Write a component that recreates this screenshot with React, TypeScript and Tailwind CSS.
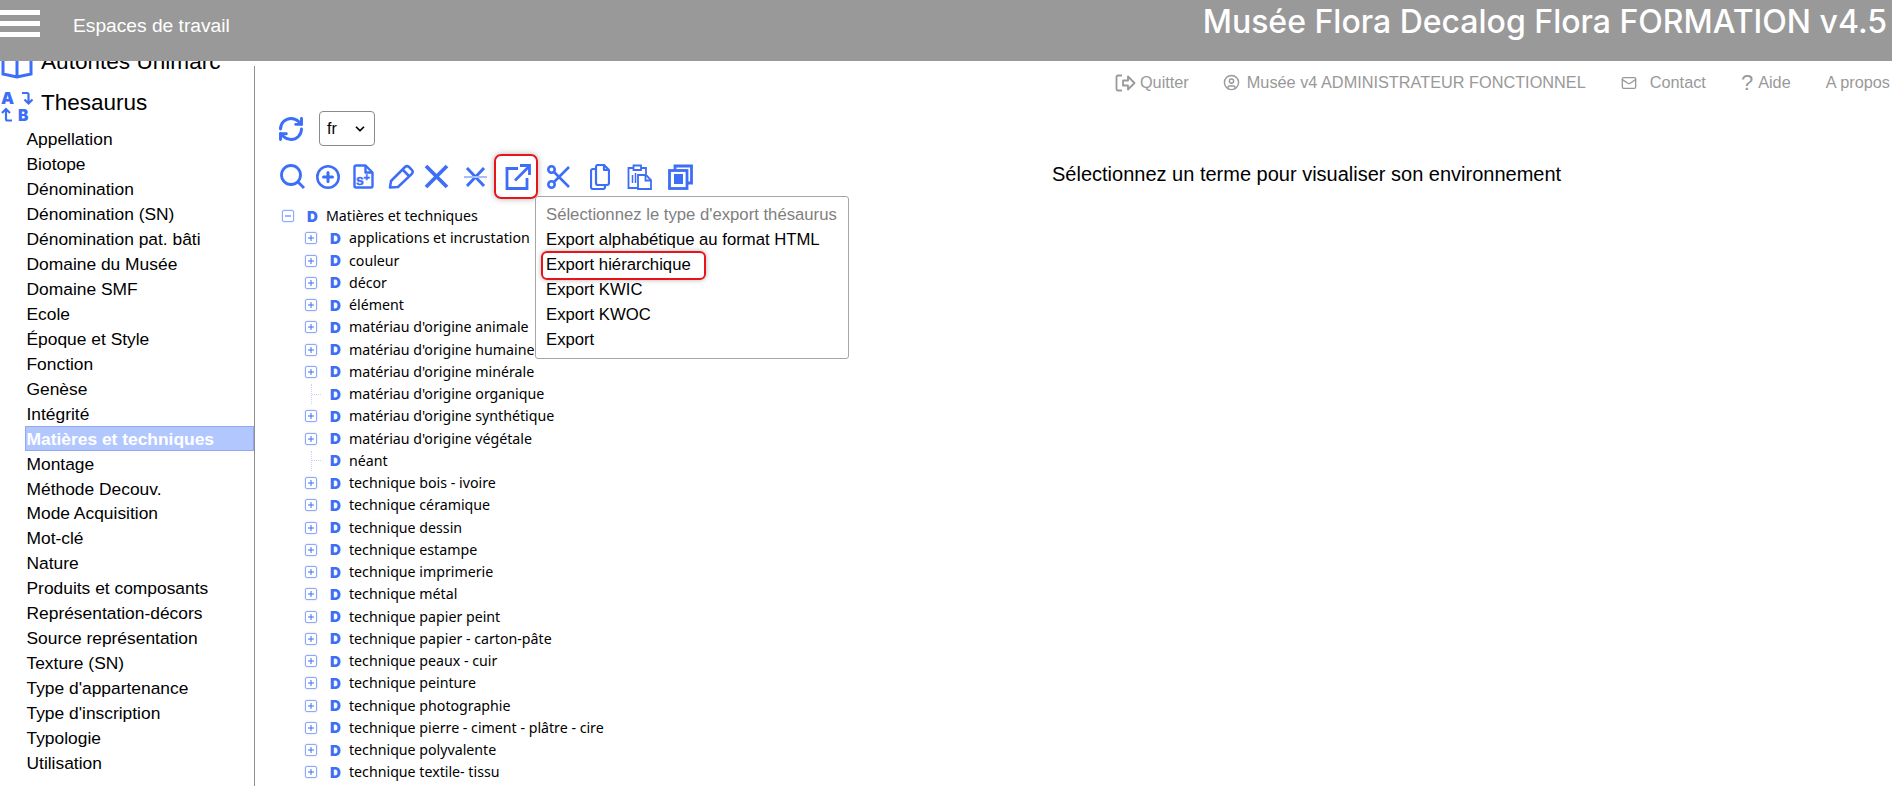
import { RefreshCw, ChevronDown, CircleUser, Mail } from 'lucide-react'

const sidebarItems = [
  'Appellation', 'Biotope', 'Dénomination', 'Dénomination (SN)', 'Dénomination pat. bâti', 'Domaine du Musée',
  'Domaine SMF', 'Ecole', 'Époque et Style', 'Fonction', 'Genèse', 'Intégrité', 'Matières et techniques', 'Montage',
  'Méthode Decouv.', 'Mode Acquisition', 'Mot-clé', 'Nature', 'Produits et composants', 'Représentation-décors',
  'Source représentation', 'Texture (SN)', "Type d'appartenance", "Type d'inscription", 'Typologie', 'Utilisation',
]

const treeItems: [string, boolean][] = [
  ['applications et incrustation', true], ['couleur', true], ['décor', true], ['élément', true],
  ["matériau d'origine animale", true], ["matériau d'origine humaine", true], ["matériau d'origine minérale", true],
  ["matériau d'origine organique", false], ["matériau d'origine synthétique", true], ["matériau d'origine végétale", true],
  ['néant', false], ['technique bois - ivoire', true], ['technique céramique', true], ['technique dessin', true],
  ['technique estampe', true], ['technique imprimerie', true], ['technique métal', true], ['technique papier peint', true],
  ['technique papier - carton-pâte', true], ['technique peaux - cuir', true], ['technique peinture', true],
  ['technique photographie', true], ['technique pierre - ciment - plâtre - cire', true], ['technique polyvalente', true],
  ['technique textile- tissu', true],
]

const exportItems = ['Export alphabétique au format HTML', 'Export hiérarchique', 'Export KWIC', 'Export KWOC', 'Export']

function ExpandBox({ minus }: { minus?: boolean }) {
  return (
    <span className="flex h-[12px] w-[12px] shrink-0 items-center justify-center rounded-[2px] border border-[#8fa8f8] bg-white text-[#3d6ef8] shadow-[0_0_2px_rgba(61,110,248,0.35)]">
      <svg width="8" height="8" viewBox="0 0 8 8">
        <path d={minus ? 'M1 4h6' : 'M1 4h6M4 1v6'} stroke="currentColor" strokeWidth="1" fill="none" />
      </svg>
    </span>
  )
}

function LetterD() {
  return <span className="w-[10px] shrink-0 font-['Inter',sans-serif] text-[15px] font-black leading-none text-[#3d6ef8]">D</span>
}

function TreeRow({ label, expandable }: { label: string; expandable: boolean }) {
  return (
    <div className="flex h-[22.25px] items-center pl-[24px]">
      {expandable ? (
        <ExpandBox />
      ) : (
        <span className="flex h-[20px] w-[12px] shrink-0 items-center">
          <span className="ml-[6px] h-full border-l border-dotted border-[#c9d4f5]" />
          <span className="w-[9px] shrink-0 border-t border-dotted border-[#c9d4f5]" />
        </span>
      )}
      <span className="ml-[13px] flex"><LetterD /></span>
      <span className="ml-[9px] whitespace-nowrap">{label}</span>
    </div>
  )
}

export default function App() {
  return (
    <div className="flex h-[786px] w-[1892px] flex-col overflow-hidden bg-white font-['Liberation_Sans',sans-serif] text-black">
      {/* header */}
      <header className="flex h-[61px] shrink-0 items-start bg-[#999999] text-white">
        <div className="mt-[10px] flex w-[40px] flex-col gap-[6px]">
          <span className="h-[5px] bg-white" />
          <span className="h-[5px] bg-white" />
          <span className="h-[5px] bg-white" />
        </div>
        <span className="ml-[33px] mt-[12px] text-[19.2px]">Espaces de travail</span>
        <span className="ml-auto mr-[5px] mt-[3px] font-['Inter',sans-serif] text-[32px] font-medium leading-[38px]">
          Musée Flora Decalog Flora FORMATION v4.5
        </span>
      </header>

      <div className="flex min-h-0 flex-1">
        {/* sidebar */}
        <aside className="w-[254px] shrink-0 overflow-hidden">
          <div className="-mt-[15px] flex h-[34px] items-center">
            <svg width="34" height="32" viewBox="0 0 34 32" fill="none" stroke="#3d6ef8" strokeWidth="3" className="ml-[1px] shrink-0">
              <path d="M2 0v27l14 3 14-3V0M16 12v18" />
            </svg>
            <span className="mb-[2px] ml-[6px] whitespace-nowrap text-[22.6px] leading-none">Autorités Unimarc</span>
          </div>
          <div className="mt-[10px] flex h-[32px] items-center">
            <svg width="33" height="32" viewBox="0 0 33 32" fill="none" stroke="#3d6ef8" strokeWidth="2.2" className="ml-[1px] shrink-0 overflow-visible">
              <text x="0" y="14" fontSize="16.5" fontWeight="900" fontFamily="Inter" fill="#3d6ef8" stroke="none">A</text>
              <text x="17" y="31" fontSize="15.5" fontWeight="900" fontFamily="Inter" fill="#3d6ef8" stroke="none">B</text>
              <path d="M21 3h5a1.500 1.500 0 0 1 1.500 1.500V13M23.500 9.500l4 4 4-4" />
              <path d="M11 30.500H6.500A1.500 1.500 0 0 1 5 29v-9M1 23l4-4 4 4" />
            </svg>
            <span className="mb-[6px] ml-[7px] text-[22.5px] leading-none">Thesaurus</span>
          </div>
          <ul className="mt-[5px] text-[17.4px]">
            {sidebarItems.map((item) => (
              <li
                key={item}
                className={
                  item === 'Matières et techniques'
                    ? 'ml-[25px] flex h-[24.95px] items-center border border-[#8fa8f0] bg-[#b3c7ff] pl-[0.5px] font-bold text-white'
                    : 'ml-[25px] flex h-[24.95px] items-center pl-[1.5px]'
                }
              >
                {item}
              </li>
            ))}
          </ul>
        </aside>
        <div className="mt-[5px] w-[1px] shrink-0 bg-[#8f8f8f]" />

        {/* main */}
        <main className="min-w-0 flex-1">
          <nav className="flex h-[42px] items-center justify-end gap-[35px] pr-[2px] pt-[1px] text-[16.3px] text-[#999999]">
            <span className="-mr-[1px] flex items-center gap-[4px]">
              <svg width="21" height="20" viewBox="0 0 21 20" fill="none" stroke="currentColor" strokeWidth="1.800">
                <path d="M7 2.500H3a1.500 1.500 0 0 0-1.500 1.500v12A1.500 1.500 0 0 0 3 17.500h4" />
                <path d="M8 7.500h5V3.500l6.500 6.500-6.500 6.500v-4H8z" strokeLinejoin="round" />
              </svg>
              Quitter
            </span>
            <span className="flex items-center gap-[7px]"><CircleUser size={17} />Musée v4 ADMINISTRATEUR FONCTIONNEL</span>
            <span className="flex items-center gap-[13px]"><Mail size={16} />Contact</span>
            <span className="flex items-center gap-[5px]"><span className="text-[22px] leading-none">?</span>Aide</span>
            <span>A propos</span>
          </nav>

          <div className="flex">
            <div className="w-[620px] shrink-0">
              <div className="ml-[22px] mt-[8px] flex items-center gap-[14px]">
                <RefreshCw size={28} color="#3d6ef8" strokeWidth={2.5} />
                <div className="flex h-[35px] w-[56px] items-center justify-between rounded-[4px] border border-[#8a8a8a] pl-[7px] pr-[7px] text-[16px]">
                  fr
                  <ChevronDown size={14} strokeWidth={3} />
                </div>
              </div>

              {/* toolbar */}
              <div className="ml-[25px] mt-[8px] flex h-[45px] items-center text-[#3d6ef8]">
                <svg width="25" height="25" viewBox="0 0 25 25" fill="none" stroke="currentColor" strokeWidth="2.800">
                  <circle cx="11" cy="11" r="9.500" />
                  <path d="M18 18l6 6" />
                </svg>
                <svg width="24" height="24" viewBox="0 0 24 24" fill="none" stroke="currentColor" strokeWidth="2.600" className="ml-[11px]">
                  <circle cx="12" cy="12" r="10.700" />
                  <path d="M12 7.500v9M7.500 12h9" strokeWidth="3" strokeLinecap="round" />
                </svg>
                <svg width="21" height="25" viewBox="0 0 21 25" fill="none" stroke="currentColor" strokeWidth="2.400" className="ml-[13px]">
                  <path d="M1.500 3a1.500 1.500 0 0 1 1.500-1.500h9.500l7 7V22a1.500 1.500 0 0 1-1.500 1.500H3A1.500 1.500 0 0 1 1.500 22z" strokeLinejoin="round" />
                  <path d="M12.500 1.500v7h7" strokeLinejoin="round" />
                  <text x="3" y="21" fontSize="14" fontWeight="700" fill="currentColor" stroke="currentColor" strokeWidth="0.4" fontFamily="Liberation Sans">s</text>
                  <text x="10.500" y="17" fontSize="11" fontWeight="700" fill="currentColor" stroke="currentColor" strokeWidth="0.4" fontFamily="Liberation Sans">+</text>
                </svg>
                <svg width="26" height="25" viewBox="0 0 26 25" fill="none" stroke="currentColor" strokeWidth="2.500" strokeLinejoin="round" className="ml-[14px]">
                  <path d="M2 23.500l1-6.500L17 3q2-1.800 4 0l2.800 2.800q1.800 2 0 4L10 23z" />
                  <path d="M14.500 5.500l6.500 6.500" />
                </svg>
                <svg width="25" height="25" viewBox="0 0 25 25" fill="none" stroke="currentColor" strokeWidth="3.800" className="ml-[10px]">
                  <path d="M2 2l21 21M23 2L2 23" />
                </svg>
                <svg width="23" height="22" viewBox="0 0 23 22" fill="none" stroke="currentColor" strokeWidth="3" className="ml-[15px]">
                  <path d="M3 2l17 18M20 2L3 20" />
                  <path d="M0 11h23" stroke="#a9bdfa" strokeWidth="2" />
                </svg>
                <span className="ml-[7px] flex h-[45px] w-[44px] shrink-0 items-center justify-center rounded-[7px] border-2 border-[#e8141c] pl-[3px] shadow-[0_0_6px_rgba(0,0,0,0.3)]">
                  <svg width="26" height="26" viewBox="0 0 26 26" fill="none" stroke="currentColor" strokeWidth="2.800">
                    <path d="M13 4.500H2v20h20V14" />
                    <path d="M10 16.500L24 2.500M15 1.500h9.500V11" />
                  </svg>
                </span>
                <svg width="23" height="24" viewBox="0 0 23 24" fill="none" stroke="currentColor" strokeWidth="2.600" className="ml-[9px]">
                  <circle cx="4.500" cy="4.500" r="3.200" />
                  <circle cx="4.500" cy="19.500" r="3.200" />
                  <path d="M7 7l15 15M7 17L22 2" />
                </svg>
                <svg width="20" height="26" viewBox="0 0 20 26" fill="none" stroke="currentColor" strokeWidth="2.200" strokeLinejoin="round" className="ml-[20px]">
                  <path d="M6 3a2 2 0 0 1 2-2h6l5 5v13a2 2 0 0 1-2 2H8a2 2 0 0 1-2-2z" />
                  <path d="M14 1v5h5" />
                  <path d="M6 5H3a2 2 0 0 0-2 2v16a2 2 0 0 0 2 2h10a2 2 0 0 0 2-2v-2" />
                </svg>
                <svg width="25" height="26" viewBox="0 0 25 26" fill="none" stroke="currentColor" strokeWidth="1.800" className="ml-[17px]">
                  <path d="M6.500 4H1.500v20H11M14 4h5v6" />
                  <path d="M6.500 1.500h7.500v4.500H6.500z" />
                  <path d="M11 11h8l5 5v9H11z" />
                  <path d="M18.500 11v5.500H24" />
                  <path d="M5.500 11v8M8.500 9v10" strokeWidth="1.500" />
                </svg>
                <svg width="25" height="26" viewBox="0 0 25 26" fill="none" stroke="currentColor" strokeWidth="2.800" className="ml-[16px]">
                  <path d="M7 6V2h16.500v17H19.500" />
                  <rect x="1.500" y="6.500" width="17.500" height="18" />
                  <rect x="6" y="10" width="9" height="10" fill="currentColor" stroke="none" />
                </svg>
              </div>

              {/* tree */}
              <div className="relative ml-[26px] mt-[6px] font-['Noto_Sans',sans-serif] text-[14.2px] leading-none text-black">
                <div className="flex h-[22.25px] items-center">
                  <span className="ml-[1px] flex"><ExpandBox minus /></span>
                  <span className="ml-[13px] flex"><LetterD /></span>
                  <span className="ml-[9px]">Matières et techniques</span>
                </div>
                {treeItems.map(([label, expandable]) => (
                  <TreeRow key={label} label={label} expandable={expandable} />
                ))}

                {/* export menu */}
                <div className="absolute left-[254px] -top-[9px] w-[314px] rounded-[3px] border border-[#a6a6a6] bg-white pb-[5px] pt-[5px] font-['Liberation_Sans',sans-serif] text-[16.7px]">
                  <div className="flex h-[26px] items-center pl-[10px] text-[#808080]">Sélectionnez le type d'export thésaurus</div>
                  {exportItems.map((item) => (
                    <div key={item} className="relative flex h-[25px] items-center pl-[10px]">
                      {item}
                      {item === 'Export hiérarchique' && (
                        <span className="absolute left-[5px] -top-[2px] h-[29px] w-[165px] rounded-[6px] border-2 border-[#e8141c] shadow-[0_0_5px_rgba(0,0,0,0.3)]" />
                      )}
                    </div>
                  ))}
                </div>
              </div>
            </div>
            <div className="ml-[177px] mt-[56px] whitespace-nowrap text-[20px]">Sélectionnez un terme pour visualiser son environnement</div>
          </div>
        </main>
      </div>
    </div>
  )
}
